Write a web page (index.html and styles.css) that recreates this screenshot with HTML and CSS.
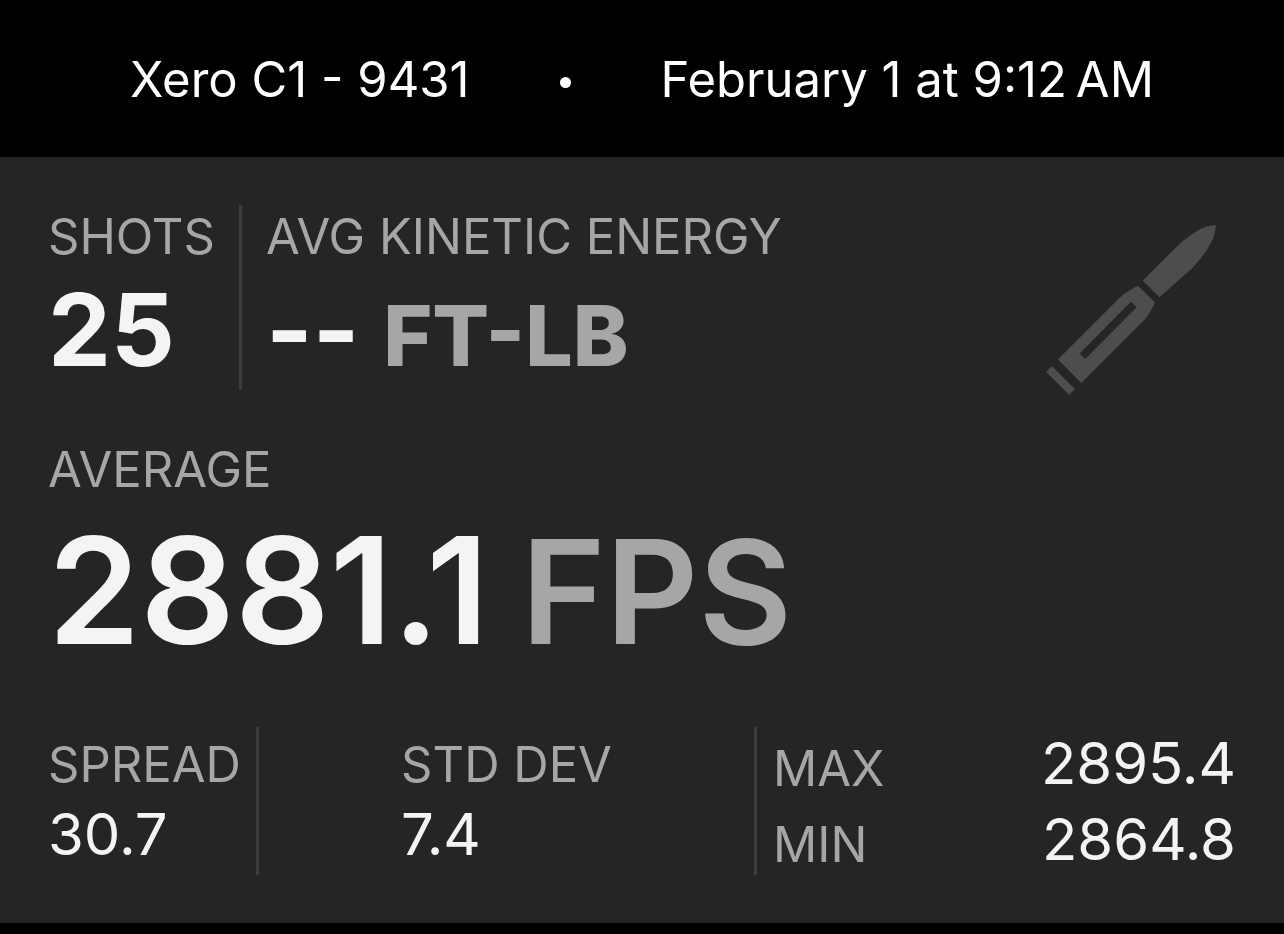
FILE: index.html
```html
<!DOCTYPE html>
<html lang="en">
<head>
<meta charset="utf-8">
<meta name="viewport" content="width=device-width, initial-scale=1">
<title>Xero C1 - 9431</title>
<link rel="stylesheet" href="styles.css">
</head>
<body>
<header class="session">
  <span>Xero C1 - 9431</span>
  <span class="session-dot"></span>
  <time>February 1 at 9:12&#8239;AM</time>
</header>
<main class="card">
  <section class="top">
    <div class="stat stat-shots">
      <div class="label">SHOTS</div>
      <div class="value-bold">25</div>
    </div>
    <div class="stat stat-energy">
      <div class="label">AVG KINETIC ENERGY</div>
      <div class="value-bold">-- <span class="unit-small">FT-LB</span></div>
    </div>
    <svg class="cartridge" viewBox="50 45 508 509" aria-hidden="true">
      <path d="M558 45C556 70 551 88 538 108C525 131 506 154 486 175L389 261L339 211L447 104C467 86 490 70 510 58C527 50 541 46 558 45Z"/>
      <path fill-rule="evenodd" d="M325 227L376 277C369 292 361 306 352 319L345 328L155 518L85 448L270 263C286 249 305 236 325 227ZM304 275L150 430L167 446L321 291Z"/>
      <path d="M67 467L136 536L119 554L50 485Z"/>
    </svg>
  </section>
  <section class="average">
    <div class="label">AVERAGE</div>
    <div class="value-hero">2881.1<span class="unit-hero">FPS</span></div>
  </section>
  <section class="bottom">
    <div class="cell cell-spread">
      <div class="label">SPREAD</div>
      <div class="value">30.7</div>
    </div>
    <div class="cell cell-dev">
      <div>
        <div class="label">STD DEV</div>
        <div class="value">7.4</div>
      </div>
    </div>
    <div class="range">
      <div class="range-row"><span class="label">MAX</span><span class="range-value">2895.4</span></div>
      <div class="range-row"><span class="label">MIN</span><span class="range-value">2864.8</span></div>
    </div>
  </section>
</main>
</body>
</html>
```
FILE: styles.css
```css
* { box-sizing: border-box; }

body {
  margin: 0;
  background: #000;
  color: #f4f4f4;
  font-family: Inter, "Liberation Sans", sans-serif;
}

.session {
  display: flex;
  align-items: center;
  justify-content: center;
  gap: 90px;
  padding: 50px 16px 47px;
  color: #fff;
  font-size: 49px;
  line-height: 60px;
  white-space: nowrap;
}

.session-dot {
  width: 11px;
  height: 11px;
  margin-top: 4px;
  border-radius: 50%;
  background: #fff;
}

.card {
  padding: 48px;
  background: #252525;
}

.label {
  color: #a6a6a6;
  font-size: 49px;
  line-height: 64px;
  white-space: nowrap;
}

.top {
  display: flex;
  align-items: flex-start;
  margin-bottom: 43px;
}

.stat-shots {
  padding-right: 24px;
  border-right: 3px solid #3d3d3d;
}

.stat-energy {
  flex: 1;
  padding-left: 24px;
}

.value-bold {
  font-size: 100px;
  font-weight: 700;
  line-height: 121px;
  white-space: nowrap;
}

.unit-small {
  color: #a6a6a6;
  font-size: 84px;
  font-weight: 800;
  line-height: 1;
}

.cartridge {
  width: 170px;
  height: 170px;
  margin: 20px 20px 0 0;
  fill: #4d4d4d;
}

.average { margin-bottom: 48px; }

.value-hero {
  font-size: 148px;
  font-weight: 600;
  line-height: 177px;
  white-space: nowrap;
}

.unit-hero {
  margin-left: 32px;
  color: #a6a6a6;
  font-size: 144px;
  line-height: 1;
}

.bottom {
  display: grid;
  grid-template-columns: 211px 498fr 479fr;
}

.cell {
  padding-top: 6px;
  border-right: 3px solid #3d3d3d;
}

.cell-dev {
  display: flex;
  justify-content: center;
}

.value,
.range-value {
  font-size: 58px;
  line-height: 74px;
}

.range {
  display: flex;
  flex-direction: column;
  gap: 4px;
  padding-left: 16px;
}

.range-row {
  display: flex;
  align-items: flex-end;
  justify-content: space-between;
}

.range-row .label { line-height: 60px; }

.range-value { line-height: 72px; }
```
